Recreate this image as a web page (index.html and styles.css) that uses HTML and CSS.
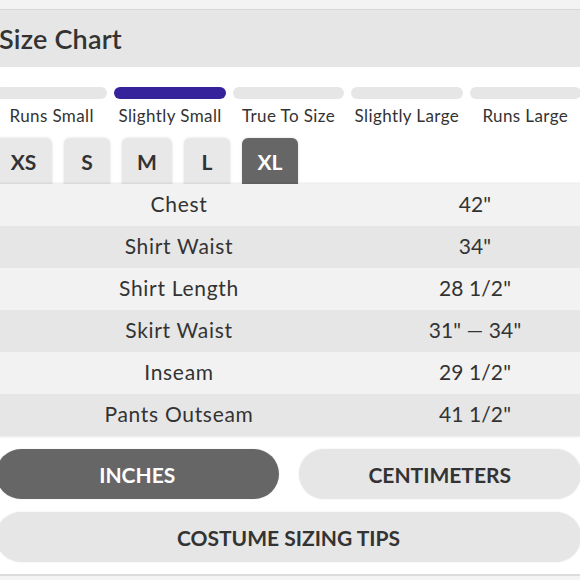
FILE: index.html
```html
<!DOCTYPE html>
<html>
<head>
<meta charset="utf-8">
<link rel="stylesheet" href="styles.css">
</head>
<body>
<div class="page">
  <div class="top-strip"></div>
  <div class="header"><h1 class="title">Size Chart</h1></div>
  <div class="fit">
    <div class="fit-item"><div class="bar"></div><div class="fit-label">Runs Small</div></div>
    <div class="fit-item"><div class="bar active"></div><div class="fit-label">Slightly Small</div></div>
    <div class="fit-item"><div class="bar"></div><div class="fit-label">True To Size</div></div>
    <div class="fit-item"><div class="bar"></div><div class="fit-label">Slightly Large</div></div>
    <div class="fit-item"><div class="bar"></div><div class="fit-label">Runs Large</div></div>
  </div>
  <div class="tabs">
    <div class="tab tab-xs">XS</div>
    <div class="tab tab-s">S</div>
    <div class="tab tab-m">M</div>
    <div class="tab tab-l">L</div>
    <div class="tab tab-xl selected">XL</div>
  </div>
  <div class="table">
    <div class="row"><div class="cell label">Chest</div><div class="cell value">42"</div></div>
    <div class="row"><div class="cell label">Shirt Waist</div><div class="cell value">34"</div></div>
    <div class="row"><div class="cell label">Shirt Length</div><div class="cell value">28 1/2"</div></div>
    <div class="row"><div class="cell label">Skirt Waist</div><div class="cell value">31" — 34"</div></div>
    <div class="row"><div class="cell label">Inseam</div><div class="cell value">29 1/2"</div></div>
    <div class="row"><div class="cell label">Pants Outseam</div><div class="cell value">41 1/2"</div></div>
  </div>
  <div class="units">
    <div class="btn btn-dark">INCHES</div>
    <div class="btn">CENTIMETERS</div>
  </div>
  <div class="btn btn-wide">COSTUME SIZING TIPS</div>
  <div class="bottom-line"></div>
  <div class="bottom-strip"></div>
</div>
</body>
</html>
```
FILE: styles.css
```css
html, body {
  margin: 0;
  padding: 0;
  background: #ffffff;
  overflow: hidden;
}
body {
  font-family: Lato, "Open Sans", "Liberation Sans", sans-serif;
  color: #333333;
}
.page {
  margin-left: -4px;
  width: 585px;
}
.top-strip {
  height: 9px;
  background: #f3f3f3;
  border-bottom: 1px solid #d6d6d6;
}
.header {
  height: 57px;
  background: #e6e6e6;
  display: flex;
  align-items: center;
  padding-left: 3px;
}
.title {
  margin: 0;
  font-size: 27px;
  font-weight: 600;
  letter-spacing: 0.2px;
  color: #333;
}
.fit {
  display: grid;
  grid-template-columns: repeat(5, 1fr);
  column-gap: 7px;
  padding-top: 20px;
}
.bar {
  height: 12px;
  border-radius: 7px;
  background: #e6e6e6;
}
.bar.active {
  background: #36229a;
}
.fit-label {
  margin-top: 7px;
  text-align: center;
  font-size: 17px;
  letter-spacing: 0.4px;
  line-height: 20px;
  color: #333;
}
.tabs {
  display: flex;
  gap: 12px;
  margin-top: 12px;
  margin-left: -1px;
}
.tab {
  height: 46px;
  display: flex;
  align-items: center;
  justify-content: center;
  background: #e8e8e8;
  border-radius: 6px 6px 0 0;
  font-size: 21px;
  font-weight: 700;
  color: #333;
  box-shadow: 0 0 3px rgba(0,0,0,0.12);
}
.tab-xs { width: 57px; }
.tab-s { width: 46px; }
.tab-m { width: 50px; }
.tab-l { width: 46px; }
.tab-xl { width: 56px; }
.tab.selected {
  background: #666666;
  color: #ffffff;
}
.table {
  box-shadow: 0 0 3px rgba(0,0,0,0.18);
  position: relative;
}
.row {
  display: grid;
  grid-template-columns: 366px 1fr;
  height: 42px;
  align-items: center;
  background: #f2f2f2;
}
.row:nth-child(even) {
  background: #e6e6e6;
}
.cell {
  text-align: center;
  font-size: 21px;
  letter-spacing: 0.7px;
  line-height: 24px;
  padding-bottom: 2px;
}
.value {
  padding-left: 7px;
  letter-spacing: 0.1px;
}
.units {
  display: grid;
  grid-template-columns: 1fr 1fr;
  column-gap: 20px;
  margin-top: 13px;
}
.btn {
  height: 50px;
  border-radius: 25px;
  background: #e6e6e6;
  display: flex;
  align-items: center;
  justify-content: center;
  font-size: 21px;
  font-weight: 700;
  color: #333;
  box-shadow: 0 0 2px rgba(0,0,0,0.1);
}
.btn-dark {
  background: #666666;
  color: #ffffff;
}
.btn-wide {
  margin-top: 13px;
}
.bottom-line {
  margin-top: 12px;
  height: 2px;
  background: #dcdcdc;
}
.bottom-strip {
  height: 10px;
  background: #f4f4f4;
}
```
